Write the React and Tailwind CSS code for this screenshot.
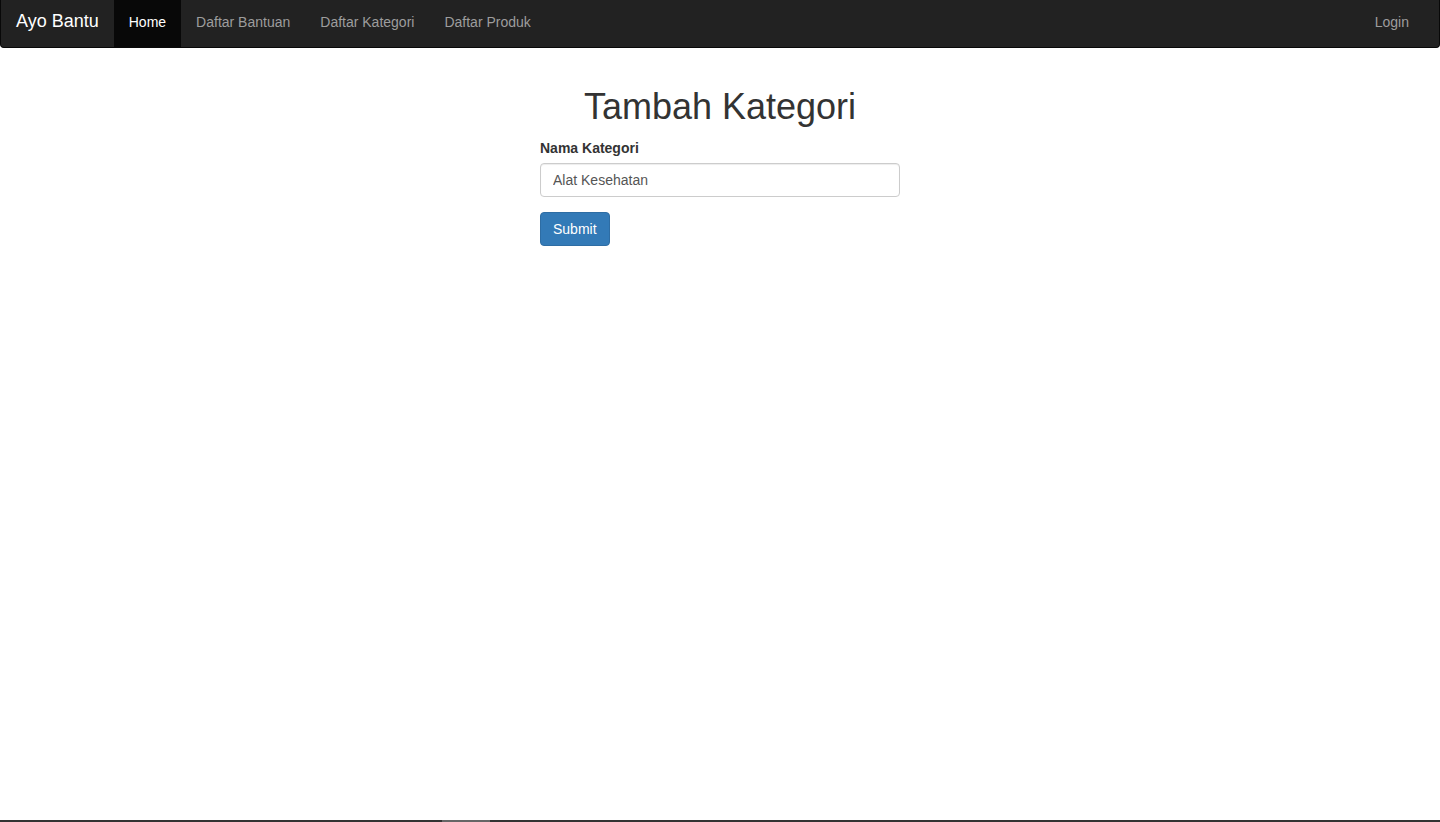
import React from "react";

export default function App() {
  const font = { fontFamily: '"Liberation Sans", Arial, sans-serif' };
  return (
    <div className="min-h-[822px] h-[822px] flex flex-col bg-white text-[#333] text-[14px]" style={font}>
      <nav className="h-[48px] bg-[#222] border border-t-0 border-[#080808] rounded-b-[4px] flex items-stretch justify-between">
        <div className="flex items-stretch">
          <a className="pl-[15px] pr-[15px] pt-[11px] pb-[15px] text-[18px] leading-[20px] text-white">Ayo Bantu</a>
          <a className="px-[15px] pt-[12px] pb-[15px] leading-[20px] bg-[#080808] text-white">Home</a>
          <a className="px-[15px] pt-[12px] pb-[15px] leading-[20px] text-[#9d9d9d]">Daftar Bantuan</a>
          <a className="px-[15px] pt-[12px] pb-[15px] leading-[20px] text-[#9d9d9d]">Daftar Kategori</a>
          <a className="px-[15px] pt-[12px] pb-[15px] leading-[20px] text-[#9d9d9d]">Daftar Produk</a>
        </div>
        <div className="flex items-stretch pr-[15px]">
          <a className="px-[15px] pt-[12px] pb-[15px] leading-[20px] text-[#9d9d9d]">Login</a>
        </div>
      </nav>
      <main className="flex-1 flex justify-center pt-[39px]">
        <div className="w-[360px]">
          <h1 className="text-[36px] leading-[40px] text-center text-[#333] mb-[11px]">Tambah Kategori</h1>
          <label className="block font-bold leading-[20px] mb-[5px]">Nama Kategori</label>
          <input
            readOnly
            value="Alat Kesehatan"
            className="block w-full h-[34px] px-[12px] py-[6px] text-[14px] text-[#555] border border-[#ccc] rounded-[4px] shadow-[inset_0_1px_1px_rgba(0,0,0,0.075)] outline-none"
            style={font}
          />
          <button
            className="mt-[15px] h-[34px] px-[12px] text-[14px] leading-[20px] text-white bg-[#337ab7] border border-[#2e6da4] rounded-[4px]"
            style={font}
          >
            Submit
          </button>
        </div>
      </main>
      <div className="h-[2px] bg-[#333] flex">
        <div className="ml-[442px] w-[48px] h-full bg-[#666]"></div>
      </div>
    </div>
  );
}
